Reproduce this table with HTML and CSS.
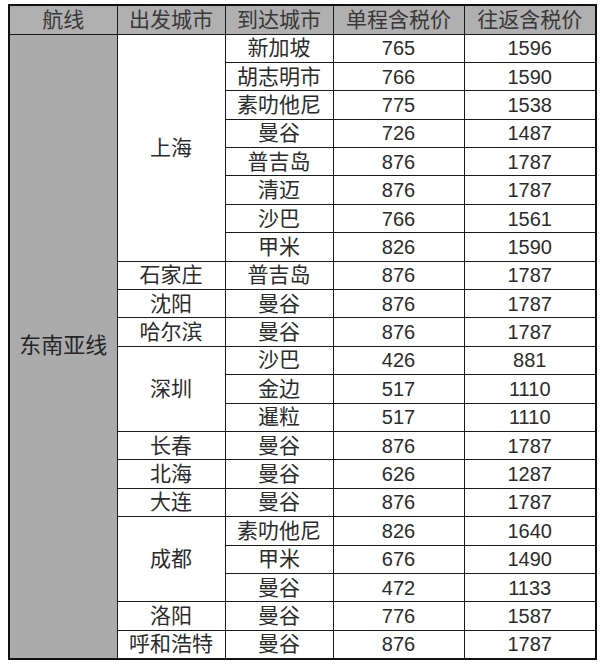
FILE: index.html
```html
<!DOCTYPE html>
<html lang="zh-CN">
<head>
<meta charset="utf-8">
<title>东南亚线</title>
<link rel="stylesheet" href="styles.css">
</head>
<body>
<table class="fares">
  <colgroup>
    <col class="c-route"><col class="c-from"><col class="c-to"><col class="c-one"><col class="c-rt">
  </colgroup>
  <thead>
    <tr><th>航线</th><th>出发城市</th><th>到达城市</th><th>单程含税价</th><th>往返含税价</th></tr>
  </thead>
  <tbody>
    <tr><td class="route" rowspan="22">东南亚线</td><td rowspan="8">上海</td><td>新加坡</td><td class="num">765</td><td class="num">1596</td></tr>
    <tr><td>胡志明市</td><td class="num">766</td><td class="num">1590</td></tr>
    <tr><td>素叻他尼</td><td class="num">775</td><td class="num">1538</td></tr>
    <tr><td>曼谷</td><td class="num">726</td><td class="num">1487</td></tr>
    <tr><td>普吉岛</td><td class="num">876</td><td class="num">1787</td></tr>
    <tr><td>清迈</td><td class="num">876</td><td class="num">1787</td></tr>
    <tr><td>沙巴</td><td class="num">766</td><td class="num">1561</td></tr>
    <tr><td>甲米</td><td class="num">826</td><td class="num">1590</td></tr>
    <tr><td>石家庄</td><td>普吉岛</td><td class="num">876</td><td class="num">1787</td></tr>
    <tr><td>沈阳</td><td>曼谷</td><td class="num">876</td><td class="num">1787</td></tr>
    <tr><td>哈尔滨</td><td>曼谷</td><td class="num">876</td><td class="num">1787</td></tr>
    <tr><td rowspan="3">深圳</td><td>沙巴</td><td class="num">426</td><td class="num">881</td></tr>
    <tr><td>金边</td><td class="num">517</td><td class="num">1110</td></tr>
    <tr><td>暹粒</td><td class="num">517</td><td class="num">1110</td></tr>
    <tr><td>长春</td><td>曼谷</td><td class="num">876</td><td class="num">1787</td></tr>
    <tr><td>北海</td><td>曼谷</td><td class="num">626</td><td class="num">1287</td></tr>
    <tr><td>大连</td><td>曼谷</td><td class="num">876</td><td class="num">1787</td></tr>
    <tr><td rowspan="3">成都</td><td>素叻他尼</td><td class="num">826</td><td class="num">1640</td></tr>
    <tr><td>甲米</td><td class="num">676</td><td class="num">1490</td></tr>
    <tr><td>曼谷</td><td class="num">472</td><td class="num">1133</td></tr>
    <tr><td>洛阳</td><td>曼谷</td><td class="num">776</td><td class="num">1587</td></tr>
    <tr><td>呼和浩特</td><td>曼谷</td><td class="num">876</td><td class="num">1787</td></tr>
  </tbody>
</table>
</body>
</html>
```
FILE: styles.css
```css
html, body {
  margin: 0;
  padding: 0;
  background: #ffffff;
}
body {
  padding: 4px 0 0 8px;
  font-family: "Liberation Sans", "Noto Sans CJK SC", sans-serif;
  color: #2b2b2b;
}
.fares {
  border-collapse: collapse;
  table-layout: fixed;
  width: 588px;
  border: 2px solid #111;
  font-size: 21px;
}
.c-route, .c-from, .c-to { width: 108px; }
.c-one { width: 131px; }
.c-rt { width: 132px; }
.fares th, .fares td {
  border: 1px solid #1a1a1a;
  padding: 0;
  text-align: center;
  vertical-align: middle;
  line-height: 24px;
  white-space: nowrap;
  overflow: hidden;
}
.fares thead tr { height: 29px; }
.fares th {
  background: #b1b0b0;
  font-weight: normal;
  color: #383838;
}
.fares tbody tr { height: 28.4px; }
.fares td.num { font-size: 20px; }
.fares td.route {
  background: #ababab;
  color: #262626;
  font-size: 22px;
}
```
